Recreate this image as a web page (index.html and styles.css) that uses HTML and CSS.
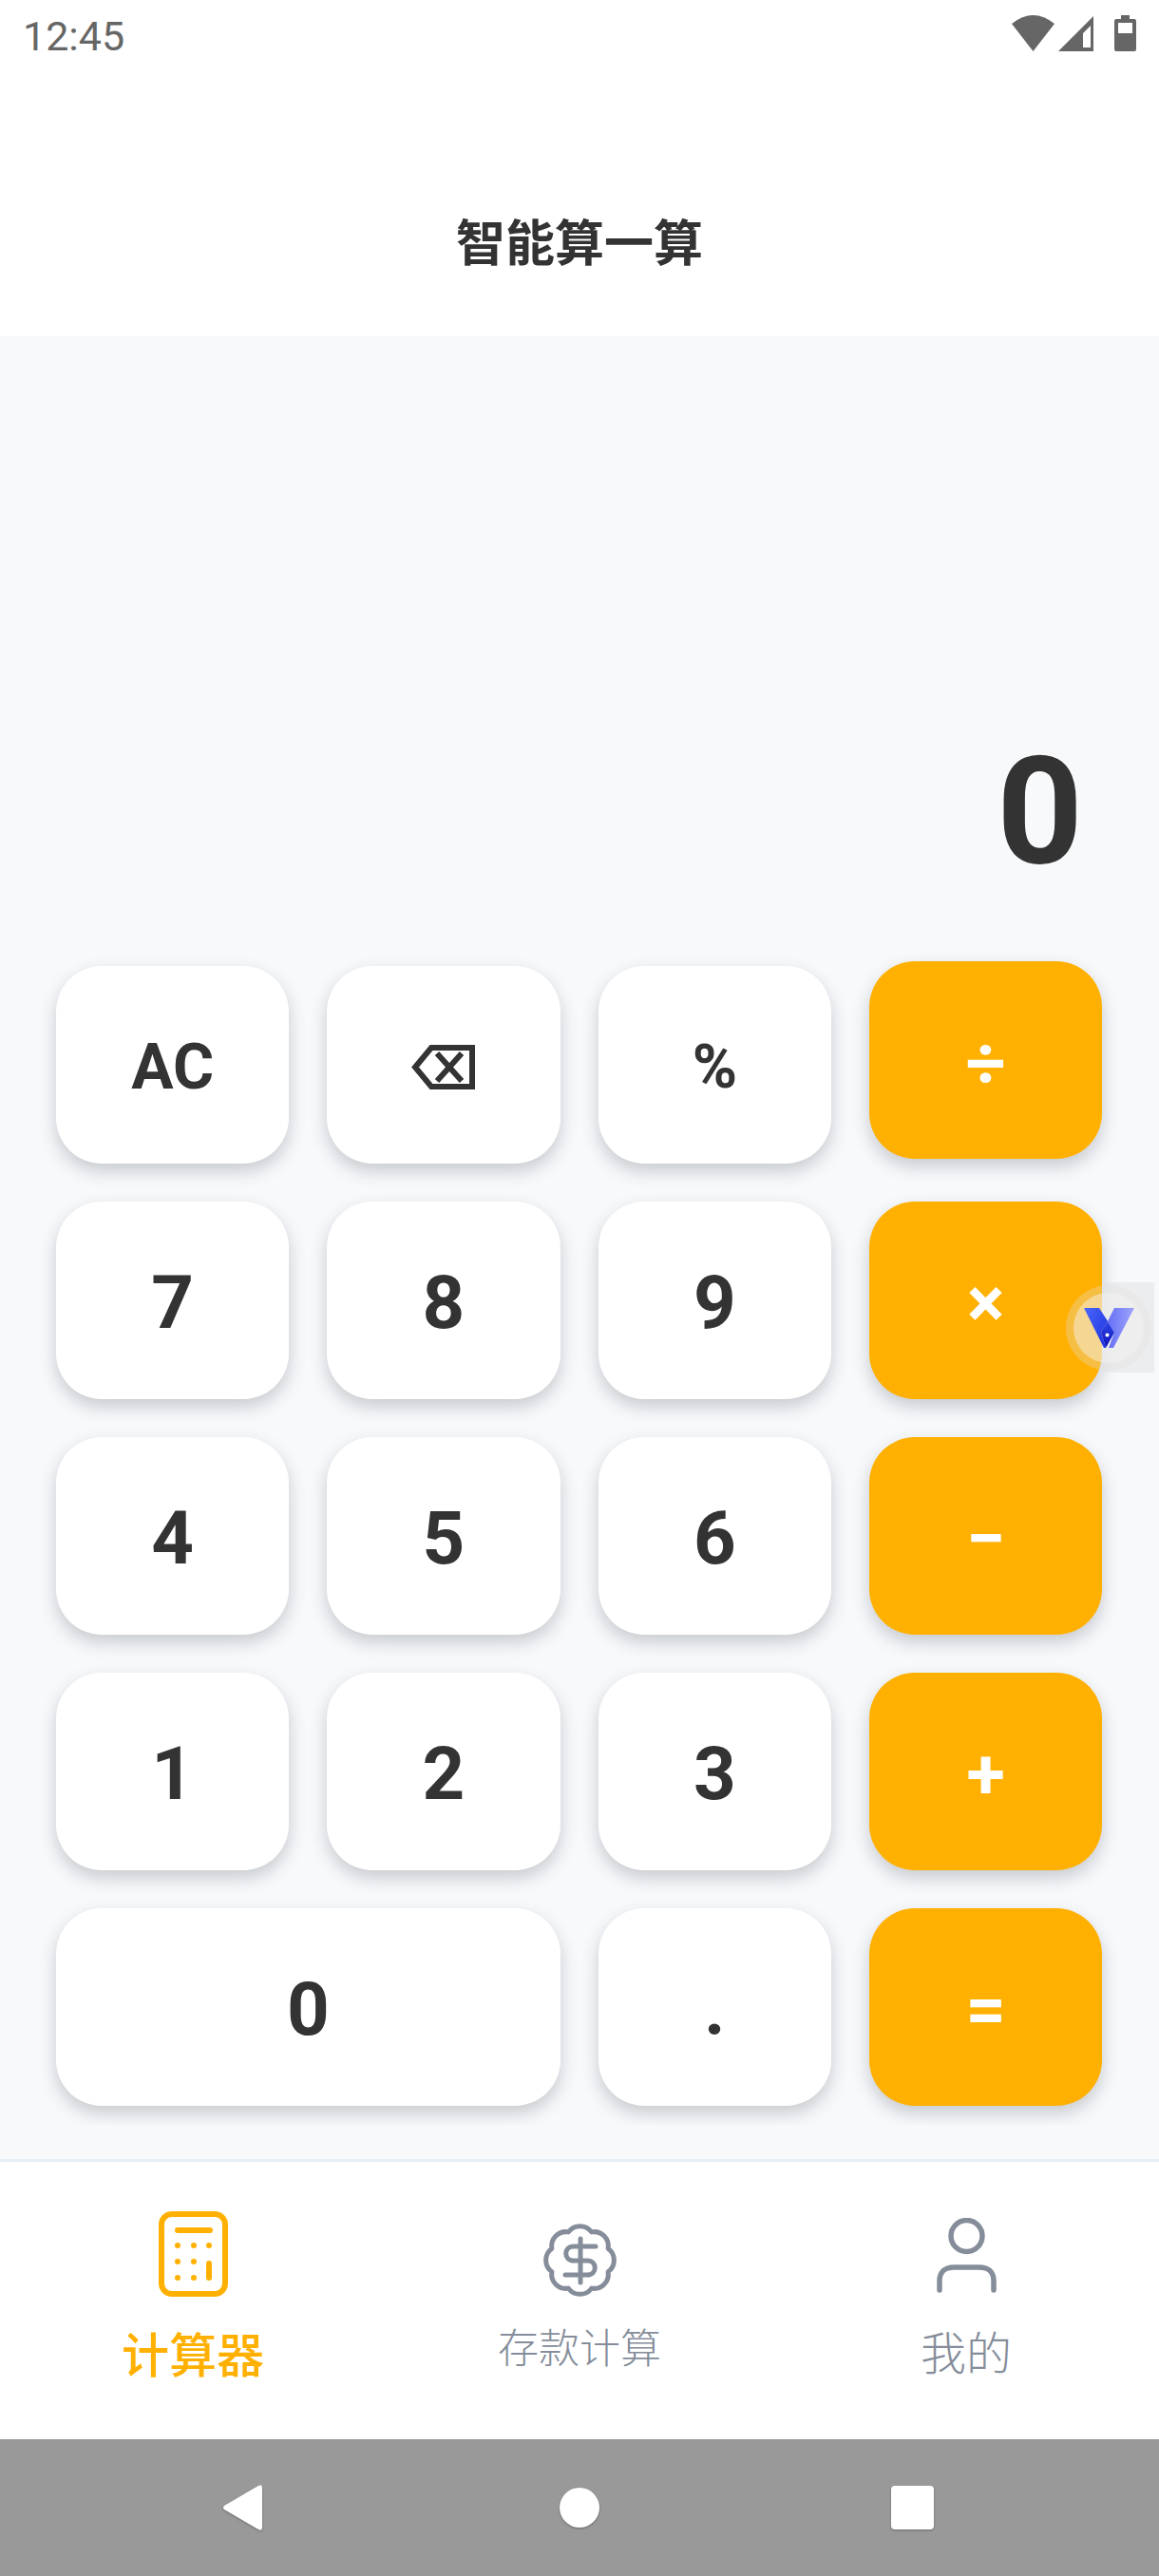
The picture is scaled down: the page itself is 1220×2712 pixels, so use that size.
FILE: index.html
```html
<!DOCTYPE html>
<html lang="zh-CN">
<head>
    <meta charset="UTF-8">
    <meta name="viewport" content="width=device-width, initial-scale=1.0">
    <title>智能算一算</title>
    <link rel="stylesheet" href="styles.css">
</head>
<body>
    <div id="content">
        <div class="status">
            <span class="time">12:45</span>
            <svg width="131" height="38" viewBox="0 0 131 38" fill="#666">
                <path d="M0 9 Q22.5 -9 45 9 L22.5 38 Z"/>
                <path d="M49 38 L86 1 V38 Z M75 34 H83 V11 L75 19 Z" fill-rule="evenodd"/>
                <path d="M108 6 Q108 4 110 4 H115 V0 H124 V4 H129 Q131 4 131 6 V36 Q131 38 129 38 H110 Q108 38 108 36 Z M112 8 V19 H127 V8 Z" fill-rule="evenodd"/>
            </svg>
        </div>

        <div class="header">
            <h1>智能算一算</h1>
        </div>

        <div class="body">
            <div class="display">0</div>

            <div class="keys">
                <button class="key label">AC</button>
                <button class="key">
                    <svg width="67" height="47" viewBox="0 0 67 47" fill="none" stroke="#333" stroke-width="6">
                        <path d="M64 3 H21 L4 23.5 L21 44 H64 Z"/>
                        <path d="M27 9 L53 38 M53 9 L27 38"/>
                    </svg>
                </button>
                <button class="key percent">%</button>
                <button class="key op raised">÷</button>

                <button class="key">7</button>
                <button class="key">8</button>
                <button class="key">9</button>
                <button class="key op">×</button>

                <button class="key">4</button>
                <button class="key">5</button>
                <button class="key">6</button>
                <button class="key op">−</button>

                <button class="key">1</button>
                <button class="key">2</button>
                <button class="key">3</button>
                <button class="key op">+</button>

                <button class="key wide">0</button>
                <button class="key">.</button>
                <button class="key op">=</button>
            </div>

            <div class="float-badge">
                <div class="float-ring">
                    <div class="float-circle">
                        <svg width="53" height="42" viewBox="0 0 53 42">
                            <defs>
                                <linearGradient id="armLeft" x1="0" y1="0" x2="1" y2="1">
                                    <stop offset="0" stop-color="#4a68f8"/>
                                    <stop offset="1" stop-color="#1c2fe0"/>
                                </linearGradient>
                                <linearGradient id="armRight" x1="0" y1="0" x2="1" y2="0">
                                    <stop offset="0" stop-color="#6670f6"/>
                                    <stop offset="1" stop-color="#a0a6fb"/>
                                </linearGradient>
                                <linearGradient id="gem" x1="0" y1="0" x2="0" y2="1">
                                    <stop offset="0" stop-color="#3348e8"/>
                                    <stop offset="1" stop-color="#0a12b8"/>
                                </linearGradient>
                            </defs>
                            <path d="M32 0 H53 L31 42 H26 L32 26 L25 14 Z" fill="url(#armRight)"/>
                            <path d="M0 0 H16 L25 14 L18 25 L23 42 H21 Z" fill="url(#armLeft)"/>
                            <path d="M25 14 L32 26 L23 42 L18 25 Z" fill="url(#gem)"/>
                            <circle cx="24.5" cy="28.5" r="2" fill="#fff"/>
                        </svg>
                    </div>
                </div>
            </div>
        </div>

        <div class="tabs">
            <div class="tab active">
                <svg width="73" height="90" viewBox="0 0 73 90" fill="none" stroke="#ffb000" stroke-width="6" stroke-linecap="round">
                    <rect x="3" y="3" width="67" height="84" rx="11"/>
                    <path d="M20 20 H54"/>
                    <path d="M53 55 V70"/>
                    <g fill="#ffb000" stroke="none">
                        <circle cx="20" cy="36" r="3"/>
                        <circle cx="37" cy="36" r="3"/>
                        <circle cx="53" cy="36" r="3"/>
                        <circle cx="20" cy="53" r="3"/>
                        <circle cx="37" cy="53" r="3"/>
                        <circle cx="20" cy="70" r="3"/>
                        <circle cx="37" cy="70" r="3"/>
                    </g>
                </svg>
                <span>计算器</span>
            </div>
            <div class="tab money">
                <svg width="77" height="77" viewBox="0 0 77 77" fill="none" stroke="#858d9a" stroke-width="5" stroke-linecap="round" stroke-linejoin="round">
                    <path d="M26.3 8.9 A15 15 0 0 1 50.7 8.9 A15 15 0 0 1 68.1 26.3 A15 15 0 0 1 68.1 50.7 A15 15 0 0 1 50.7 68.1 A15 15 0 0 1 26.3 68.1 A15 15 0 0 1 8.9 50.7 A15 15 0 0 1 8.9 26.3 A15 15 0 0 1 26.3 8.9 Z"/>
                    <path d="M55 24 H32 C21 24 21 39 32 39 H46 C57 39 57 54 46 54 H23"/>
                    <path d="M39 16 V62"/>
                </svg>
                <span>存款计算</span>
            </div>
            <div class="tab mine">
                <svg width="63" height="79" viewBox="0 0 63 79" fill="none" stroke="#858d9a" stroke-width="5.5" stroke-linecap="round">
                    <ellipse cx="31.5" cy="19" rx="16.5" ry="16.5"/>
                    <path d="M3 76 V66 C3 56 10 52 18 52 H45 C53 52 60 56 60 66 V76"/>
                </svg>
                <span>我的</span>
            </div>
        </div>

        <div class="navbar">
            <svg class="nav-back" width="42" height="48" viewBox="0 0 42 48">
                <path d="M38 1 Q42 -1 42 3 V45 Q42 49 38 47 L2 26 Q0 24 2 22 Z" fill="#fff"/>
            </svg>
            <svg class="nav-home" width="42" height="42" viewBox="0 0 42 42">
                <circle cx="21" cy="21" r="21" fill="#fff"/>
            </svg>
            <svg width="45" height="46" viewBox="0 0 45 46">
                <rect width="45" height="46" rx="4" fill="#fff"/>
            </svg>
        </div>
    </div>
</body>
</html>
```

FILE: styles.css
```css
*{
    font-family: 'Roboto', 'Noto Sans CJK SC', sans-serif;
    margin: 0;
    padding: 0;
    box-sizing: border-box;
}
body{
    background-color: #fff;
}
button{
    border: 0;
}

#content{
    width: 1220px;
    height: 2712px;
    overflow: hidden;
    display: flex;
    flex-direction: column;
}

.status{
    height: 72px;
    padding: 16px 24px 0;
    display: flex;
    justify-content: space-between;
    align-items: flex-start;
}
.status .time{
    font-size: 43px;
    line-height: 40px;
    margin-top: 2px;
    color: #666;
}

.header{
    height: 282px;
    padding-top: 148px;
    text-align: center;
}
.header h1{
    font-size: 52px;
    line-height: 76px;
    font-weight: 700;
    color: #333;
}

.body{
    height: 1922px;
    background-color: #f7f9fb;
    border-bottom: 3px solid #e6f0f8;
    position: relative;
}
.display{
    height: 633px;
    padding: 407px 80px 0 0;
    text-align: right;
    font-size: 158px;
    line-height: 186px;
    font-weight: 700;
    color: #333;
}

/* padding-bottom stops where the shadow of the last row gets cut */
.keys{
    display: grid;
    grid-template-columns: repeat(4, 245.33px);
    grid-auto-rows: 208px;
    gap: 40px;
    padding: 30px 0 20px 59px;
    overflow: hidden;
}
.key{
    background-color: #fff;
    border-radius: 48px;
    box-shadow: 0 8px 18px rgba(50, 55, 65, .24);
    font-size: 78px;
    font-weight: 700;
    color: #333;
    padding-top: 5px;
    display: flex;
    justify-content: center;
    align-items: center;
}
.key.label{
    font-size: 66px;
}
.key.percent{
    font-size: 64px;
}
.key.wide{
    grid-column: span 2;
}
.key.op{
    background-color: #ffb000;
    color: #fff;
    font-size: 74px;
}
.key.raised{
    margin: -5px 0 5px;
    padding-top: 6px;
}

.float-badge{
    position: absolute;
    top: 996px;
    right: 5px;
    width: 54px;
    height: 95px;
    background-color: rgba(225, 225, 225, .5);
}
.float-ring{
    position: absolute;
    top: 3px;
    right: 3px;
    width: 90px;
    height: 90px;
    border-radius: 50%;
    background-color: rgba(225, 225, 225, .3);
    display: flex;
    justify-content: center;
    align-items: center;
}
.float-circle{
    width: 74px;
    height: 74px;
    border-radius: 50%;
    background-color: rgba(245, 245, 245, .45);
    display: flex;
    justify-content: center;
    align-items: center;
}
.float-circle svg{
    flex-shrink: 0;
}

.tabs{
    height: 292px;
    display: grid;
    grid-template-columns: 406px 408px 406px;
    background-color: #fff;
}
.tab{
    display: flex;
    flex-direction: column;
    align-items: center;
    color: #858d9a;
    font-weight: 300;
}
.tab span{
    line-height: 68px;
}
.tab.active{
    padding-top: 52px;
    color: #ffb000;
    font-weight: 500;
    font-size: 50px;
}
.tab.active span{
    margin-top: 29px;
}
.tab.money{
    padding-top: 65px;
    font-size: 43px;
}
.tab.money span{
    margin-top: 21px;
}
.tab.mine{
    padding-top: 59px;
    font-size: 48px;
}
.tab.mine span{
    margin-top: 31px;
}

.navbar{
    height: 144px;
    background-color: #999;
    padding-left: 234px;
    display: flex;
    align-items: center;
}
.navbar svg{
    filter: drop-shadow(0 1px 1px rgba(0, 0, 0, .3));
}
.nav-back{
    margin-right: 313px;
}
.nav-home{
    margin-right: 307px;
}
```
